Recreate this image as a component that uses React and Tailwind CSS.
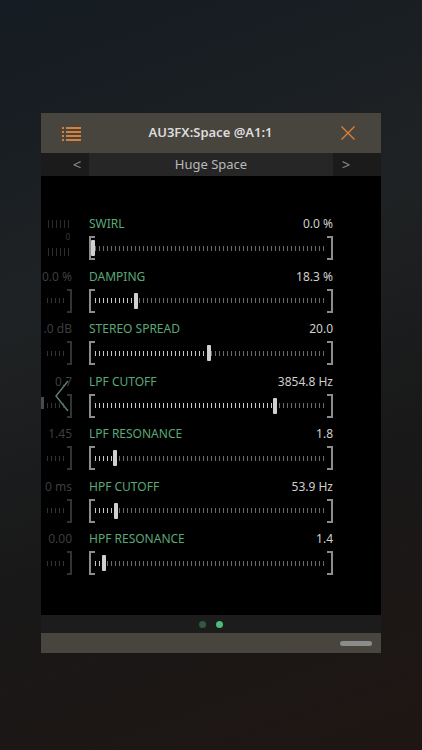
import React from "react";

const params = [
  { name: "SWIRL", value: "0.0 %", pos: 0, ghost: null },
  { name: "DAMPING", value: "18.3 %", pos: 0.183, ghost: "0.0 %" },
  { name: "STEREO SPREAD", value: "20.0", pos: 0.49, ghost: ".0 dB" },
  { name: "LPF CUTOFF", value: "3854.8 Hz", pos: 0.77, ghost: "0.7" },
  { name: "LPF RESONANCE", value: "1.8", pos: 0.094, ghost: "1.45" },
  { name: "HPF CUTOFF", value: "53.9 Hz", pos: 0.098, ghost: "0 ms" },
  { name: "HPF RESONANCE", value: "1.4", pos: 0.047, ghost: "0.00" },
];

const Slider = ({ pos }) => {
  const x = 4 + pos * 236;
  return (
    <div className="relative flex h-[24px] w-[244px] items-center">
      <div className="h-full w-[6px] border-y-2 border-l-2 border-[#8c8c8c]" />
      <div className="relative h-[5px] flex-1 bg-[repeating-linear-gradient(90deg,#6a6a6a_0_1px,transparent_1px_4px)]">
        <div
          className="h-full bg-[repeating-linear-gradient(90deg,#c8c8c8_0_1px,transparent_1px_4px)]"
          style={{ width: Math.max(0, x - 6) }}
        />
      </div>
      <div className="h-full w-[6px] border-y-2 border-r-2 border-[#8c8c8c]" />
      {/* thumb */}
      <div
        className="absolute top-[4px] h-[16px] w-[4px] rounded-[1px] bg-[#d0d0d0]"
        style={{ left: x - 2 }}
      />
    </div>
  );
};

const GhostCell = ({ row, i }) => {
  if (i === 0) {
    return (
      <div className="flex h-[52.5px] flex-col items-end pt-[4px]">
        <div className="h-[8px] w-[24px] bg-[repeating-linear-gradient(90deg,#2e2e2e_0_1px,transparent_1px_4px)]" />
        <div className="mt-[4px] mr-[2px] text-[8px] leading-[10px] text-[#3c3c3c]">0</div>
        <div className="mt-[6px] h-[8px] w-[24px] bg-[repeating-linear-gradient(90deg,#2e2e2e_0_1px,transparent_1px_4px)]" />
      </div>
    );
  }
  return (
    <div className="flex h-[52.5px] flex-col items-end">
      <div className="h-[16px] text-[12px] leading-[16px] text-[#3e3e3e] whitespace-nowrap">{row.ghost}</div>
      <div className="mt-[4px] flex h-[24px] items-center">
        <div className="h-[5px] w-[20px] bg-[repeating-linear-gradient(90deg,#333_0_1px,transparent_1px_4px)]" />
        <div className="h-full w-[5px] border-y-2 border-r-2 border-[#333]" />
      </div>
    </div>
  );
};

export default function App() {
  return (
    <div
      className="h-[750px] w-full overflow-hidden bg-[linear-gradient(160deg,#141b22_0%,#1f2224_35%,#181818_65%,#1f1613_100%)] pt-[113px]"
      style={{ fontFamily: '"Noto Sans", "Open Sans", sans-serif' }}
    >
      <div className="ml-[41px] w-[340px]">
        {/* header */}
        <div className="flex h-[40px] items-center justify-between bg-[#48443e] px-[20px]">
          <svg width="19" height="15" viewBox="0 0 19 15" className="ml-[1px]">
            {[1, 5, 9, 13].map((y) => (
              <g key={y}>
                <rect x="0" y={y} width="2" height="2" fill="#d98038" />
                <rect x="4" y={y} width="15" height="2" fill="#d98038" />
              </g>
            ))}
          </svg>
          <div className="text-[13px] font-semibold text-[#dcdcdc]">AU3FX:Space @A1:1</div>
          <svg width="16" height="16" viewBox="0 0 16 16" className="mr-[5px]">
            <path d="M1.5 1.5 L14.5 14.5 M14.5 1.5 L1.5 14.5" stroke="#d98038" strokeWidth="1.4" />
          </svg>
        </div>
        {/* preset bar */}
        <div className="flex h-[23px] items-center bg-[#1b1b1b] text-[13px] text-[#b8b8b8]">
          <div className="flex w-[48px] justify-center pl-[24px] text-[15px] text-[#8a8a8a]">&lt;</div>
          <div className="flex h-full flex-1 items-center justify-center bg-[#262626]">Huge Space</div>
          <div className="flex w-[48px] justify-center pr-[22px] text-[15px] text-[#8a8a8a]">&gt;</div>
        </div>
        {/* content */}
        <div className="relative flex h-[439px] bg-black pt-[40px]">
          <div className="w-[31px] overflow-hidden">
            {params.map((p, i) => (
              <GhostCell key={p.name} row={p} i={i} />
            ))}
          </div>
          <div className="ml-[17px] w-[244px]">
            {params.map((p) => (
              <div key={p.name} className="h-[52.5px]">
                <div className="flex h-[16px] items-center justify-between text-[12px] leading-[16px]">
                  <span className="text-[#5aa878]">{p.name}</span>
                  <span className="text-[#cfcfcf]">{p.value}</span>
                </div>
                <div className="mt-[4px]">
                  <Slider pos={p.pos} />
                </div>
              </div>
            ))}
          </div>
          {/* page arrow overlay */}
          <svg
            width="16"
            height="32"
            viewBox="0 0 16 32"
            className="absolute left-[13px] top-[204px]"
          >
            <path d="M14 1 L2 16 L14 31" stroke="#5b7d69" strokeWidth="1.5" fill="none" />
          </svg>
          <div className="absolute left-0 top-[221px] h-[12px] w-[3px] bg-[#4a4a4a]" />
        </div>
        {/* page dots */}
        <div className="flex h-[18px] items-center justify-center gap-[10px] bg-[#1c1c1c]">
          <div className="h-[7px] w-[7px] rounded-full bg-[#2f5a40]" />
          <div className="h-[7px] w-[7px] rounded-full bg-[#4dba75]" />
        </div>
        {/* bottom bar */}
        <div className="flex h-[20px] items-center justify-end bg-[#48443e] pr-[9px]">
          <div className="h-[5px] w-[32px] rounded-full bg-[#8c8c8c]" />
        </div>
      </div>
    </div>
  );
}
